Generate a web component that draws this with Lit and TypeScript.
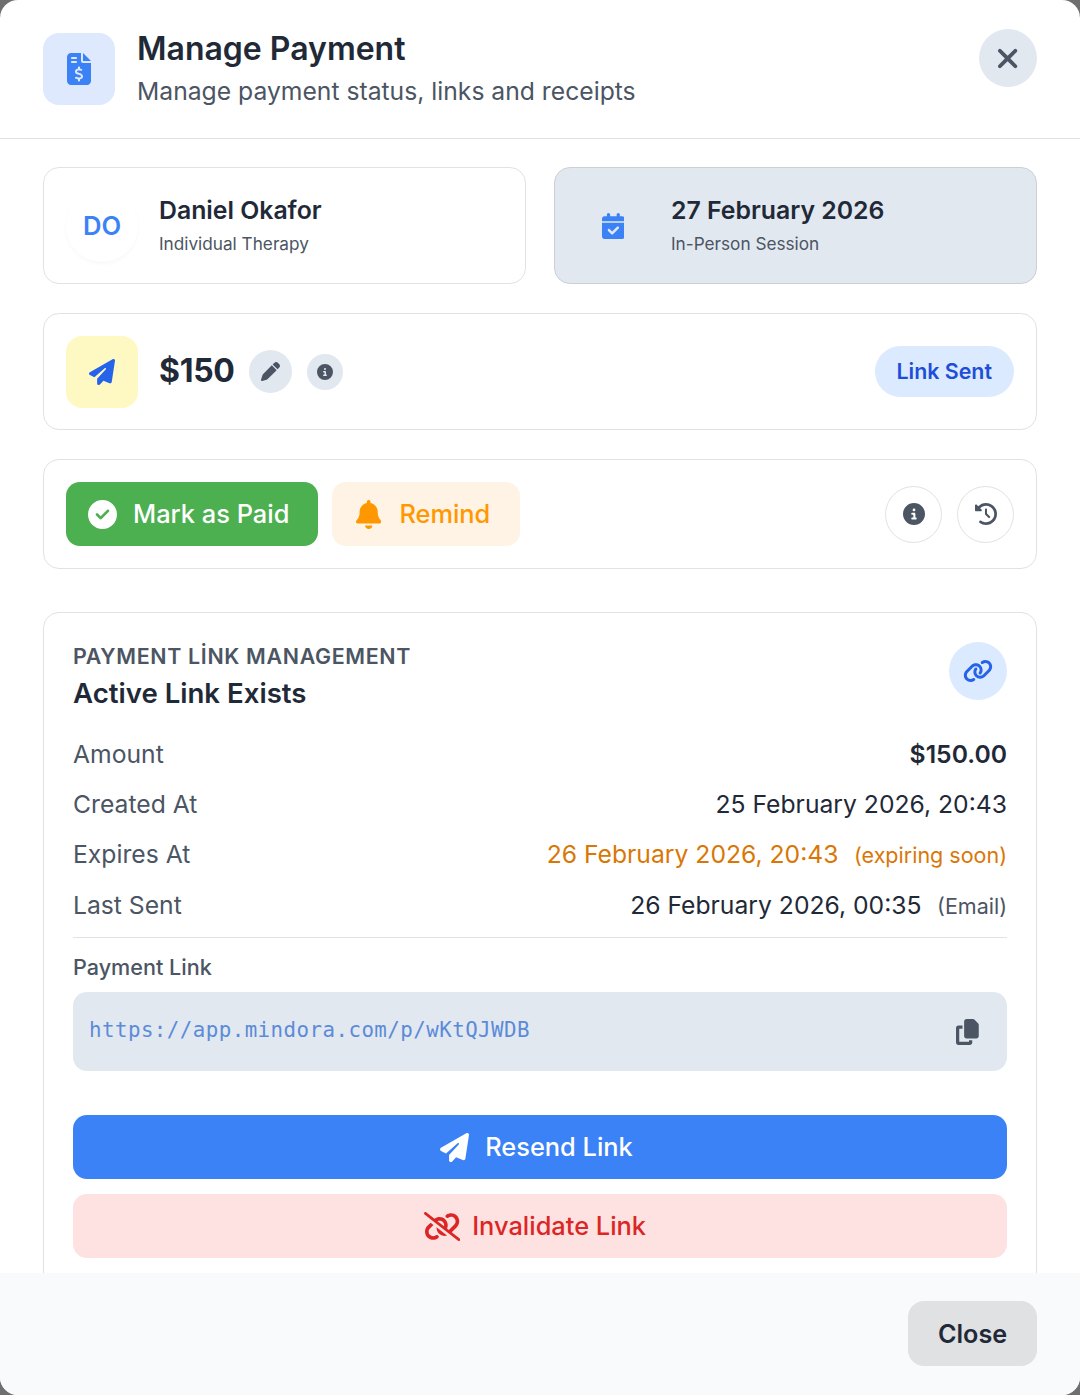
import { LitElement, html, css, svg } from "lit";
import { customElement } from "lit/decorators.js";

const P = {
  invoice: [384, 512, "M64 0C28.7 0 0 28.7 0 64V448c0 35.3 28.7 64 64 64H320c35.3 0 64-28.7 64-64V160H256c-17.7 0-32-14.3-32-32V0H64zM256 0V128H384L256 0zM64 80c0-8.8 7.2-16 16-16h64c8.8 0 16 7.2 16 16s-7.2 16-16 16H80c-8.8 0-16-7.2-16-16zm0 64c0-8.8 7.2-16 16-16h64c8.8 0 16 7.2 16 16s-7.2 16-16 16H80c-8.8 0-16-7.2-16-16zm128 72c8.8 0 16 7.2 16 16v17.3c8.5 1.2 16.7 3.1 24.1 5.1c8.5 2.3 13.6 11 11.3 19.6s-11 13.6-19.6 11.3c-11.1-3-22-5.2-32.1-5.3c-8.4-.1-17.4 1.8-23.6 5.5c-5.7 3.4-8.1 7.3-8.1 12.8c0 3.7 1.3 6.5 7.3 10.1c6.9 4.1 16.6 7.1 29.2 10.9l.5 .1 0 0 0 0c11.3 3.4 25.3 7.6 36.3 14.6c12.1 7.6 22.4 19.7 22.7 38.2c.3 19.3-9.6 33.3-22.9 41.6c-7.7 4.8-16.4 7.6-25.1 9.1V440c0 8.8-7.2 16-16 16s-16-7.2-16-16V422.2c-11.2-2.1-21.7-5.7-30.9-8.9l0 0 0 0c-2.1-.7-4.2-1.4-6.2-2.1c-8.4-2.8-12.9-11.9-10.1-20.2s11.9-12.9 20.2-10.1c2.5 .8 4.8 1.6 7.1 2.4l0 0 0 0 0 0c13.6 4.6 24.6 8.4 36.3 8.7c9.1 .3 17.9-1.7 23.7-5.3c5.1-3.2 7.9-7.3 7.8-14c-.1-4.6-1.8-7.8-7.7-11.6c-6.8-4.3-16.5-7.4-29-11.2l-1.6-.5 0 0c-11-3.3-24.3-7.3-34.8-13.7c-12-7.2-22.6-18.9-22.7-37.3c-.1-19.4 10.8-32.8 23.8-40.5c7.5-4.4 15.8-7.2 24.1-8.7V232c0-8.8 7.2-16 16-16z"],
  xmark: [384, 512, "M342.6 150.6c12.5-12.5 12.5-32.8 0-45.3s-32.8-12.5-45.3 0L192 210.7 86.6 105.4c-12.5-12.5-32.8-12.5-45.3 0s-12.5 32.8 0 45.3L146.7 256 41.4 361.4c-12.5 12.5-12.5 32.8 0 45.3s32.8 12.5 45.3 0L192 301.3 297.4 406.6c12.5 12.5 32.8 12.5 45.3 0s12.5-32.8 0-45.3L237.3 256 342.6 150.6z"],
  calendar: [448, 512, "M128 0c17.7 0 32 14.3 32 32V64H288V32c0-17.7 14.3-32 32-32s32 14.3 32 32V64h48c26.5 0 48 21.5 48 48v48H0V112C0 85.5 21.5 64 48 64H96V32c0-17.7 14.3-32 32-32zM0 192H448V464c0 26.5-21.5 48-48 48H48c-26.5 0-48-21.5-48-48V192zM329 305c9.4-9.4 9.4-24.6 0-33.9s-24.6-9.4-33.9 0l-95 95-47-47c-9.4-9.4-24.6-9.4-33.9 0s-9.4 24.6 0 33.9l64 64c9.4 9.4 24.6 9.4 33.9 0L329 305z"],
  plane: [512, 512, "M498.1 5.6c10.1 7 15.4 19.1 13.5 31.2l-64 416c-1.5 9.7-7.4 18.2-16 23s-18.9 5.4-28 1.6L284 427.7l-68.5 74.1c-8.9 9.7-22.9 12.9-35.2 8.1S160 493.2 160 480V396.4c0-4 1.5-7.8 4.2-10.7L331.8 202.8c5.8-6.3 5.6-16-.4-22s-15.7-6.4-22-.7L106 360.8 17.7 316.6C7.1 311.3 .3 300.7 0 288.9s5.9-22.8 16.1-28.7l448-256c10.7-6.1 23.9-5.5 34 1.4z"],
  pen: [512, 512, "M362.7 19.3L314.3 67.7 444.3 197.7l48.4-48.4c25-25 25-65.5 0-90.5L453.3 19.3c-25-25-65.5-25-90.5 0zm-71 71L58.6 323.5c-10.4 10.4-18 23.3-22.2 37.4L1 481.2C-1.5 489.7 .8 498.8 7 505s15.3 8.5 23.7 6.1l120.3-35.4c14.1-4.2 27-11.8 37.4-22.2L421.7 220.3 291.7 90.3z"],
  info: [512, 512, "M256 512A256 256 0 1 0 256 0a256 256 0 1 0 0 512zM216 336h24V272H216c-13.3 0-24-10.7-24-24s10.7-24 24-24h48c13.3 0 24 10.7 24 24v88h8c13.3 0 24 10.7 24 24s-10.7 24-24 24H216c-13.3 0-24-10.7-24-24s10.7-24 24-24zm40-208a32 32 0 1 1 0 64 32 32 0 1 1 0-64z"],
  check: [512, 512, "M256 512A256 256 0 1 0 256 0a256 256 0 1 0 0 512zM369 209L241 337c-9.4 9.4-24.6 9.4-33.9 0l-64-64c-9.4-9.4-9.4-24.6 0-33.9s24.6-9.4 33.9 0l47 47L335 175c9.4-9.4 24.6-9.4 33.9 0s9.4 24.6 0 33.9z"],
  bell: [448, 512, "M224 0c-17.7 0-32 14.3-32 32V51.2C119 66 64 130.6 64 208v18.8c0 47-17.3 92.4-48.5 127.6l-7.4 8.3c-8.4 9.4-10.4 22.9-5.3 34.4S19.4 416 32 416H416c12.6 0 24-7.4 29.2-18.9s3.1-25-5.3-34.4l-7.4-8.3C401.3 319.2 384 273.9 384 226.8V208c0-77.4-55-142-128-156.8V32c0-17.7-14.3-32-32-32zm45.3 493.3c12-12 18.7-28.3 18.7-45.3H224 160c0 17 6.7 33.3 18.7 45.3s28.3 18.7 45.3 18.7s33.3-6.7 45.3-18.7z"],
  history: [512, 512, "M75 75L41 41C25.9 25.9 0 36.6 0 57.9V168c0 13.3 10.7 24 24 24H134.1c21.4 0 32.1-25.9 17-41l-30.8-30.8C155 85.5 203 64 256 64c106 0 192 86 192 192s-86 192-192 192c-40.8 0-78.6-12.7-109.7-34.4c-14.5-10.1-34.4-6.6-44.6 7.9s-6.6 34.4 7.9 44.6C151.2 495 201.7 512 256 512c141.4 0 256-114.6 256-256S397.4 0 256 0C185.3 0 121.3 28.7 75 75zm181 53c-13.3 0-24 10.7-24 24V256c0 6.4 2.5 12.5 7 17l72 72c9.4 9.4 24.6 9.4 33.9 0s9.4-24.6 0-33.9l-65-65V152c0-13.3-10.7-24-24-24z"],
  link: [640, 512, "M579.8 267.7c56.5-56.5 56.5-148 0-204.5c-50-50-128.8-56.5-186.3-15.4l-1.6 1.1c-14.4 10.3-17.7 30.3-7.4 44.6s30.3 17.7 44.6 7.4l1.6-1.1c32.1-22.9 76-19.3 103.8 8.6c31.5 31.5 31.5 82.5 0 114L422.3 334.8c-31.5 31.5-82.5 31.5-114 0c-27.9-27.9-31.5-71.8-8.6-103.8l1.1-1.6c10.3-14.4 6.9-34.4-7.4-44.6s-34.4-6.9-44.6 7.4l-1.1 1.6C206.5 251.2 213 330 263 380c56.5 56.5 148 56.5 204.5 0L579.8 267.7zM60.2 244.3c-56.5 56.5-56.5 148 0 204.5c50 50 128.8 56.5 186.3 15.4l1.6-1.1c14.4-10.3 17.7-30.3 7.4-44.6s-30.3-17.7-44.6-7.4l-1.6 1.1c-32.1 22.9-76 19.3-103.8-8.6C74 372 74 321 105.5 289.5L217.7 177.2c31.5-31.5 82.5-31.5 114 0c27.9 27.9 31.5 71.8 8.6 103.9l-1.1 1.6c-10.3 14.4-6.9 34.4 7.4 44.6s34.4 6.9 44.6-7.4l1.1-1.6C433.5 260.8 427 182 377 132c-56.5-56.5-148-56.5-204.5 0L60.2 244.3z"],
  unlink: [640, 512, "M38.8 5.1C28.4-3.1 13.3-1.2 5.1 9.2S-1.2 34.7 9.2 42.9l592 464c10.4 8.2 25.5 6.3 33.7-4.1s6.3-25.5-4.1-33.7L489.3 358.2l90.5-90.5c56.5-56.5 56.5-148 0-204.5c-50-50-128.8-56.5-186.3-15.4l-1.6 1.1c-14.4 10.3-17.7 30.3-7.4 44.6s30.3 17.7 44.6 7.4l1.6-1.1c32.1-22.9 76-19.3 103.8 8.6c31.5 31.5 31.5 82.5 0 114l-96 96-31.9-25C430.9 239.6 420.1 175.1 377 132c-52.2-52.3-134.5-56.2-191.3-11.7L38.8 5.1zM239 162c30.1-14.9 67.7-9.9 92.8 15.3c20 20 27.5 48.3 21.7 74.5L239 162zM116.6 187.9L60.2 244.3c-56.5 56.5-56.5 148 0 204.5c50 50 128.8 56.5 186.3 15.4l1.6-1.1c14.4-10.3 17.7-30.3 7.4-44.6s-30.3-17.7-44.6-7.4l-1.6 1.1c-32.1 22.9-76 19.3-103.8-8.6C74 372 74 321 105.5 289.5l61.8-61.8-50.6-39.9zM220.9 270c-2.1 39.8 12.2 80.1 42.2 110c38.9 38.9 94.4 51 143.6 36.3L220.9 270z"],
  copy: [448, 512, "M208 0H332.1c12.7 0 24.9 5.1 33.9 14.1l67.9 67.9c9 9 14.1 21.2 14.1 33.9V336c0 26.5-21.5 48-48 48H208c-26.5 0-48-21.5-48-48V48c0-26.5 21.5-48 48-48zM48 128h80v64H64V448H256V416h64v48c0 26.5-21.5 48-48 48H48c-26.5 0-48-21.5-48-48V176c0-26.5 21.5-48 48-48z"],
} as const;

function icon(name: keyof typeof P, height: number) {
  const [w, h, d] = P[name];
  return html`<svg class="ic" viewBox="0 0 ${w} ${h}" style="height:${height}px;width:${(height * w) / h}px" aria-hidden="true">${svg`<path fill="currentColor" d=${d}></path>`}</svg>`;
}

@customElement("app-root")
export class AppRoot extends LitElement {
  static styles = css`
    :host { display: block; width: 1080px; height: 1395px; background: #6f6f6f; font-family: Inter, "Liberation Sans", sans-serif; color: #1f2937; }
    * { box-sizing: border-box; }
    .ic { display: block; flex: none; }
    .modal { width: 1080px; height: 1395px; background: #fff; border-radius: 18px; overflow: hidden; display: flex; flex-direction: column; }
    .head { height: 139px; flex: none; border-bottom: 1px solid #e2e2e4; padding: 0 43px; display: flex; align-items: center; gap: 22px; }
    .head-ic { width: 72px; height: 72px; border-radius: 16px; background: #dfe9fd; color: #3b82f6; display: flex; align-items: center; justify-content: center; flex: none; }
    .head-text { flex: 1; display: flex; flex-direction: column; gap: 4px; }
    h1 { margin: 0; font-size: 32px; line-height: 40px; font-weight: 600; color: #1f2937; }
    .sub { font-size: 24.7px; line-height: 36px; color: #4b5563; }
    .x { width: 58px; height: 58px; border-radius: 50%; background: #e2e8f0; color: #4b5563; display: flex; align-items: center; justify-content: center; align-self: flex-start; margin-top: 29px; }
    .body { flex: 1; min-height: 0; overflow: hidden; padding: 28px 43px 0; display: flex; flex-direction: column; }
    .top { display: grid; grid-template-columns: 1fr 1fr; gap: 28px; }
    .card { border: 1px solid #e2e2e4; border-radius: 16px; background: #fff; padding: 22px; display: flex; align-items: center; }
    .who { height: 117px; gap: 21px; }
    .when { height: 117px; gap: 22px; background: #e2e8f0; border-color: #cbd0d6; }
    .avatar { width: 72px; height: 72px; border-radius: 50%; background: #fff; box-shadow: 0 2px 4px rgba(0,0,0,.03); color: #3b82f6; font-size: 25.6px; font-weight: 600; display: flex; align-items: center; justify-content: center; flex: none; }
    .cal { width: 72px; height: 72px; color: #3b82f6; display: flex; align-items: center; justify-content: center; flex: none; }
    .name { font-size: 24.8px; line-height: 34px; font-weight: 600; color: #1f2937; }
    .kind { font-size: 17.2px; line-height: 28px; color: #4b5563; margin-top: 3px; }
    .amount { height: 117px; margin-top: 29px; gap: 22px; }
    .plane { width: 72px; height: 72px; border-radius: 16px; background: #fef9c3; color: #2563eb; display: flex; align-items: center; justify-content: center; flex: none; }
    .price { font-size: 32px; line-height: 40px; font-weight: 700; letter-spacing: -0.3px; color: #1f2937; margin: -1px 0 0 -1px; }
    .mini { border-radius: 50%; background: #e2e8f0; color: #4b5563; display: flex; align-items: center; justify-content: center; flex: none; }
    .edit { width: 43px; height: 43px; margin-left: -8px; }
    .inf { width: 36px; height: 36px; margin-left: -7px; }
    .spacer { flex: 1; }
    .pill { height: 51px; padding: 0 22px 2px 21px; border-radius: 26px; background: #dbeafe; color: #1d4ed8; font-size: 21.4px; font-weight: 600; display: flex; align-items: center; }
    .actions { height: 110px; margin-top: 29px; gap: 14px; }
    .btn { height: 64px; border-radius: 14px; display: flex; align-items: center; justify-content: center; font-size: 25.4px; font-weight: 500; }
    .btn span { margin-top: -2px; }
    .paid { width: 252px; background: #4caf50; color: #fff; gap: 16px; justify-content: flex-start; padding-left: 22px; }
    .remind { width: 188px; background: #fff3e6; color: #ff9800; gap: 18px; justify-content: flex-start; padding-left: 24px; }
    .round { width: 57px; height: 57px; border-radius: 50%; border: 1px solid #e2e2e4; color: #4b5563; display: flex; align-items: center; justify-content: center; flex: none; }
    .round + .round { margin-left: 1px; }
    .section { margin-top: 43px; flex: none; border: 1px solid #e2e2e4; border-radius: 16px; padding: 28px 29px 40px; }
    .sec-head { display: flex; justify-content: space-between; }
    .eyebrow { font-size: 21.4px; line-height: 30px; font-weight: 600; letter-spacing: 0.67px; color: #4b5563; }
    h2 { margin: 1px 0 0; font-size: 27.6px; line-height: 42px; font-weight: 600; color: #1f2937; }
    .link-ic { width: 58px; height: 58px; margin-top: 1px; border-radius: 50%; background: #dbeafe; color: #2563eb; display: flex; align-items: center; justify-content: center; flex: none; }
    .rows { margin-top: 14.7px; }
    .row { height: 50.3px; display: flex; align-items: center; justify-content: space-between; font-size: 24.7px; color: #4b5563; }
    .v { color: #1f2937; display: flex; align-items: baseline; gap: 15.5px; }
    .v.strong { font-weight: 600; }
    .v.warn { color: #d97706; }
    .note { font-size: 21.5px; color: #4b5563; }
    .warn .note { color: #d97706; }
    .rule { border-top: 1px solid #e2e2e4; margin-top: 7.3px; }
    .plabel { font-size: 21.6px; line-height: 30px; font-weight: 500; color: #4b5563; margin-top: 14px; }
    .url { height: 79px; margin-top: 10px; background: #e2e8f0; border-radius: 14px; padding: 0 28px 0 16px; display: flex; align-items: center; justify-content: space-between; }
    .url span { font-family: "DejaVu Sans Mono", "Liberation Mono", monospace; font-size: 20.8px; letter-spacing: 0.45px; color: #5b8bd8; margin-top: -4px; }
    .url .cp { color: #4b5563; }
    .resend { margin-top: 44px; background: #3b82f6; color: #fff; gap: 16px; padding-right: 7px; }
    .inval { margin-top: 15px; background: #fee2e2; color: #dc2626; gap: 12px; padding-right: 10px; }
    .foot { flex: none; height: 122px; background: #f9fafb; display: flex; align-items: center; justify-content: flex-end; padding: 0 43px 2px 0; position: relative; }
    .close { width: 129px; height: 65px; padding-top: 2px; border-radius: 16px; background: #e0e1e3; color: #1f2937; font-size: 25.2px; font-weight: 600; display: flex; align-items: center; justify-content: center; }
  `;

  render() {
    return html`
      <div class="modal">
        <header class="head">
          <div class="head-ic">${icon("invoice", 32)}</div>
          <div class="head-text">
            <h1>Manage Payment</h1>
            <div class="sub">Manage payment status, links and receipts</div>
          </div>
          <div class="x">${icon("xmark", 31)}</div>
        </header>
        <main class="body">
          <div class="top">
            <div class="card who">
              <div class="avatar">DO</div>
              <div><div class="name">Daniel Okafor</div><div class="kind">Individual Therapy</div></div>
            </div>
            <div class="card when">
              <div class="cal">${icon("calendar", 26)}</div>
              <div><div class="name">27 February 2026</div><div class="kind">In-Person Session</div></div>
            </div>
          </div>
          <div class="card amount">
            <div class="plane">${icon("plane", 26)}</div>
            <div class="price">$150</div>
            <div class="mini edit">${icon("pen", 19)}</div>
            <div class="mini inf">${icon("info", 16)}</div>
            <div class="spacer"></div>
            <div class="pill">Link Sent</div>
          </div>
          <div class="card actions">
            <div class="btn paid">${icon("check", 29)}<span>Mark as Paid</span></div>
            <div class="btn remind">${icon("bell", 29)}<span>Remind</span></div>
            <div class="spacer"></div>
            <div class="round">${icon("info", 22)}</div>
            <div class="round">${icon("history", 22)}</div>
          </div>
          <section class="section">
            <div class="sec-head">
              <div><div class="eyebrow">PAYMENT LİNK MANAGEMENT</div><h2>Active Link Exists</h2></div>
              <div class="link-ic">${icon("link", 24)}</div>
            </div>
            <div class="rows">
              <div class="row"><span>Amount</span><span class="v strong">$150.00</span></div>
              <div class="row"><span>Created At</span><span class="v">25 February 2026, 20:43</span></div>
              <div class="row"><span>Expires At</span><span class="v warn">26 February 2026, 20:43<span class="note">(expiring soon)</span></span></div>
              <div class="row"><span>Last Sent</span><span class="v">26 February 2026, 00:35<span class="note">(Email)</span></span></div>
            </div>
            <div class="rule"></div>
            <div class="plabel">Payment Link</div>
            <div class="url"><span>https://app.mindora.com/p/wKtQJWDB</span><div class="cp">${icon("copy", 26)}</div></div>
            <div class="btn resend">${icon("plane", 29)}<span>Resend Link</span></div>
            <div class="btn inval">${icon("unlink", 29)}<span>Invalidate Link</span></div>
          </section>
        </main>
        <footer class="foot"><div class="close">Close</div></footer>
      </div>
    `;
  }
}
